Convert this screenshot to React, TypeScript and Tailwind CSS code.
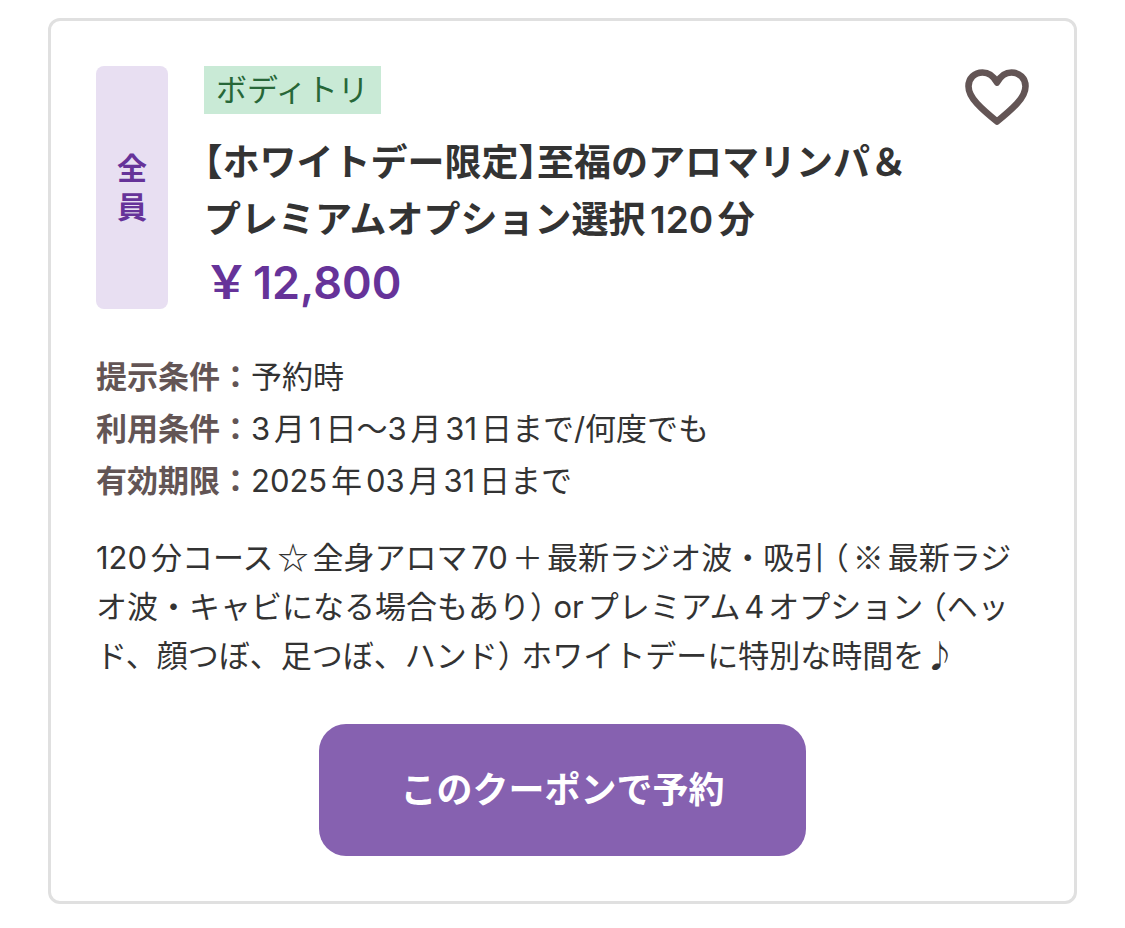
import React from "react";

const conditions = [
  { label: "提示条件：", value: "予約時" },
  { label: "利用条件：", value: "3月1日〜3月31日まで/何度でも" },
  { label: "有効期限：", value: "2025年03月31日まで" },
];

const HeartIcon = () => (
  <svg
    viewBox="0 0 64 56"
    className="h-14 w-16"
    fill="none"
    stroke="currentColor"
    strokeWidth="6.6"
    strokeLinejoin="round"
    aria-hidden="true"
  >
    <path d="M32 13.5C28.5 7 23.5 3.5 17.5 3.5C9.5 3.5 3.5 9.5 3.5 17.2C3.5 23.5 6.5 28.5 12 34.5C17.5 40.5 24 46 32 52.5C40 46 46.5 40.5 52 34.5C57.5 28.5 60.5 23.5 60.5 17.2C60.5 9.5 54.5 3.5 46.5 3.5C40.5 3.5 35.5 7 32 13.5Z" />
  </svg>
);

// Full-width brackets set on half a cell
const Open = ({ children }: { children: React.ReactNode }) => (
  <span className="ml-2 [font-feature-settings:'halt']">{children}</span>
);

const Close = ({ children }: { children: React.ReactNode }) => (
  <span className="mr-2 [font-feature-settings:'halt']">{children}</span>
);

// Inter has its own small ☆ and ※, so symbols use the Japanese font
const Mark = ({ children }: { children: React.ReactNode }) => (
  <span className="mx-1 [font-family:'Noto_Sans_CJK_JP',sans-serif]">
    {children}
  </span>
);

const App = () => {
  return (
    <main
      lang="ja"
      className="flow-root min-h-screen bg-white text-[#333333] [font-family:Inter,'Noto_Sans_CJK_JP',sans-serif] [text-autospace:normal]"
    >
      <article className="mx-12 mt-[18px] mb-6 rounded-xl border-[3px] border-[#e0e0e0] p-[45px]">
        <div className="flex gap-9">
          <div className="flex w-[72px] shrink-0 items-center justify-center rounded-lg bg-[#e8dff2]">
            <p className="w-[31px] text-center text-[30px] leading-[39px] font-semibold text-[#663399]">
              全員
            </p>
          </div>
          <div className="flex-1">
            <span className="block h-12 w-fit bg-[#c9ead6] px-3 text-[31px] leading-[48px] text-[#276738]">
              ボディトリ
            </span>
            <h2 className="mt-5 text-[37px] leading-[57px] font-semibold">
              <span className="[font-feature-settings:'halt']">【</span>
              ホワイトデー限定
              <span className="[font-feature-settings:'halt']">】</span>
              至福のアロマリンパ＆
              <br />
              プレミアムオプション選択120分
            </h2>
            <p className="mt-2 text-[45px] leading-[53px] font-semibold text-[#663399]">
              ￥<span className="ml-1">12,800</span>
            </p>
          </div>
          <button
            type="button"
            aria-label="お気に入り"
            className="mt-[3px] h-14 w-16 shrink-0 text-[#635555]"
          >
            <HeartIcon />
          </button>
        </div>

        <dl className="mt-[42px] text-[31px] leading-[52px]">
          {conditions.map((condition) => (
            <div key={condition.label} className="flex">
              <dt className="font-semibold text-[#635555]">
                {condition.label}
              </dt>
              <dd>{condition.value}</dd>
            </div>
          ))}
        </dl>

        <p className="mt-6 text-[31px] leading-[49px]">
          120分コース<Mark>☆</Mark>全身アロマ70<Mark>＋</Mark>
          最新ラジオ波・吸引<Open>（</Open>
          <Mark>※</Mark>最新ラジ
          <br />
          オ波・キャビになる場合もあり<Close>）</Close>
          orプレミアム4オプション<Open>（</Open>ヘッ
          <br />
          ド、顔つぼ、足つぼ、ハンド<Close>）</Close>
          ホワイトデーに特別な時間を♪
        </p>

        <button
          type="button"
          className="mx-auto mt-11 block h-[132px] w-[487px] max-w-full rounded-[27px] bg-[#8661b0] text-[36px] font-semibold text-white"
        >
          このクーポンで予約
        </button>
      </article>
    </main>
  );
};

export default App;
